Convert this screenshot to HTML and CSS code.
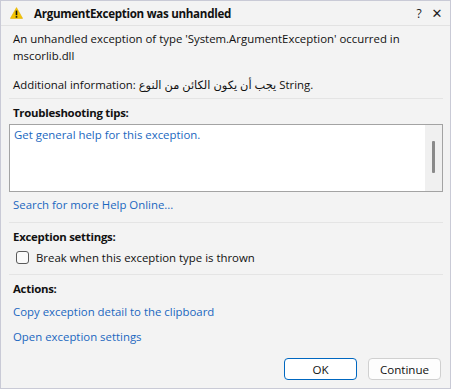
FILE: index.html
```html
<!DOCTYPE html>
<html lang="en">

<head>
  <meta charset="UTF-8">
  <title>ArgumentException was unhandled</title>
  <link rel="stylesheet" href="styles.css">
</head>

<body>
  <div class="dialog">
    <div class="titlebar">
      <svg class="warn" width="13" height="12" viewBox="0 0 13 12">
        <path d="M6.5 0.6 L12.6 11.4 L0.4 11.4 Z" fill="#f5c400" stroke="#e0b000" stroke-width="0.6" stroke-linejoin="round"/>
        <rect x="5.7" y="3.6" width="1.6" height="4.6" fill="#111"/>
        <rect x="5.7" y="9.1" width="1.6" height="1.6" fill="#111"/>
      </svg>
      <span class="title">ArgumentException was unhandled</span>
      <span class="tb-btn">?</span>
      <span class="tb-btn close">✕</span>
    </div>

    <div class="content">
      <div class="section info">
        <p>An unhandled exception of type 'System.ArgumentException' occurred in mscorlib.dll</p>
        <p class="additional">Additional information: يجب أن يكون الكائن من النوع String.</p>
      </div>

      <div class="section">
        <h2>Troubleshooting tips:</h2>
        <div class="tips">
          <div class="tips-list">
            <a href="#">Get general help for this exception.</a>
          </div>
          <div class="scrollbar"><div class="thumb"></div></div>
        </div>
        <a href="#" class="more">Search for more Help Online...</a>
      </div>

      <div class="section">
        <h2>Exception settings:</h2>
        <label class="check"><span class="box"></span>Break when this exception type is thrown</label>
      </div>

      <div class="section actions">
        <h2>Actions:</h2>
        <a href="#">Copy exception detail to the clipboard</a>
        <a href="#">Open exception settings</a>
      </div>

      <div class="btn-row">
        <button class="primary">OK</button>
        <button>Continue</button>
      </div>
    </div>
  </div>
</body>

</html>
```

FILE: styles.css
```css
body {
  margin: 0;
  font-family: 'Open Sans', 'DejaVu Sans', sans-serif;
  font-size: 11.4px;
  color: #111;
  background: #fff;
}

.dialog {
  width: 449px;
  height: 387px;
  background: #f3f3f3;
  border: 1px solid #c9cad6;
  display: flex;
  flex-direction: column;
}

.titlebar {
  height: 24px;
  display: flex;
  align-items: center;
  padding: 0 4px 0 9px;
  border-bottom: 1px solid #e2e2e2;
}

.warn {
  margin-right: 11px;
}

.title {
  flex: 1;
  font-weight: 700;
  font-size: 11.6px;
  letter-spacing: -0.3px;
}

.tb-btn {
  width: 18px;
  text-align: center;
  font-size: 12px;
  color: #222;
}

.close {
  font-size: 13px;
}

.content {
  padding: 0 7px 0 8px;
  flex: 1;
  display: flex;
  flex-direction: column;
}

.section {
  border-bottom: 1px solid #e4e4e4;
  padding: 0 4px;
}

p {
  margin: 0;
  line-height: 17px;
}

.info {
  padding-top: 4px;
  padding-bottom: 5px;
}

.additional {
  margin-top: 12px;
}

h2 {
  font-size: 11.4px;
  font-weight: 700;
  letter-spacing: -0.25px;
  margin: 5px 0 3px 0;
  line-height: 17px;
}

a {
  color: #1a67c0;
  text-decoration: none;
}

.tips {
  display: flex;
  height: 66px;
  margin: 0 -4px;
  background: #fff;
  border: 1px solid #a3a3a3;
}

.tips-list {
  flex: 1;
  padding: 1px 4px;
  line-height: 17px;
}

.scrollbar {
  width: 17px;
  background: #f0f0f0;
  display: flex;
  justify-content: center;
  padding-top: 16px;
}

.thumb {
  width: 3px;
  height: 32px;
  background: #8a8a8a;
  border-radius: 1px;
}

.more {
  display: block;
  line-height: 17px;
  margin: 4px 0 9px 0;
}

.check {
  display: flex;
  align-items: center;
  margin: 4px 0 8px 3px;
  line-height: 17px;
}

.box {
  width: 11px;
  height: 11px;
  border: 1px solid #5a5a5a;
  border-radius: 3px;
  background: #fafafa;
  margin-right: 7px;
}

.actions {
  border-bottom: none;
}

.actions h2 {
  margin-bottom: 6px;
}

.actions a {
  display: block;
  line-height: 17px;
  margin-bottom: 8px;
}

.btn-row {
  display: flex;
  justify-content: flex-end;
  gap: 11px;
  margin-top: auto;
  padding-bottom: 8px;
  padding-right: 2px;
}

button {
  width: 73px;
  height: 22px;
  font-family: inherit;
  font-size: 11.6px;
  color: #111;
  background: #fdfdfd;
  border: 1px solid #d0d0d0;
  border-radius: 4px;
}

button.primary {
  border-color: #0067c0;
  background: #fff;
}
```
